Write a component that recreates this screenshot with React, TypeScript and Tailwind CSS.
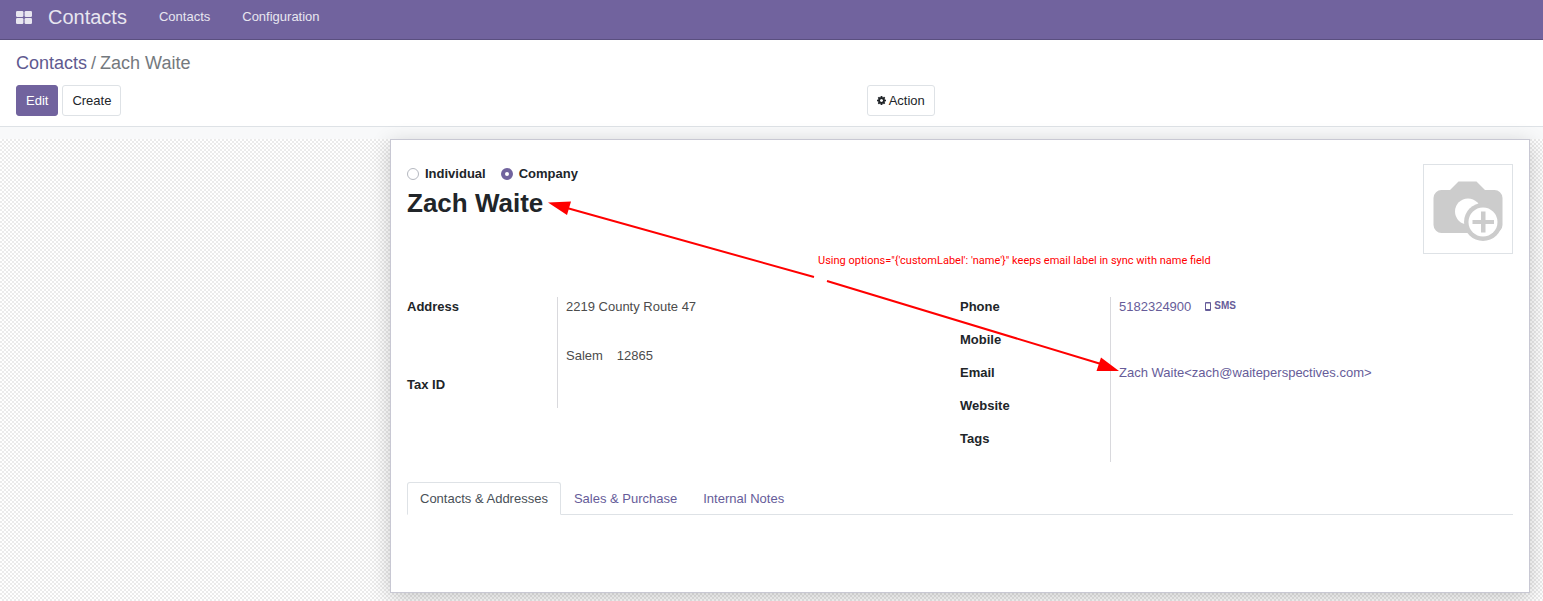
import { useState, type ReactNode } from "react";

function GridIcon() {
  return (
    <svg viewBox="0 0 16 13" className="h-[13px] w-4" fill="currentColor" aria-hidden="true">
      <rect x="0" y="0" width="7.4" height="6" rx="1.2" />
      <rect x="8.6" y="0" width="7.4" height="6" rx="1.2" />
      <rect x="0" y="7" width="7.4" height="6" rx="1.2" />
      <rect x="8.6" y="7" width="7.4" height="6" rx="1.2" />
    </svg>
  );
}

function CogIcon() {
  return (
    <svg viewBox="128 128 1536 1536" className="size-[9px]" fill="currentColor" aria-hidden="true">
      <path d="M1152 896q0-106-75-181t-181-75-181 75-75 181 75 181 181 75 181-75 75-181zm512-109v222q0 12-8 23t-20 13l-185 28q-19 54-39 91 35 50 107 138 10 12 10 25t-9 23q-27 37-99 108t-94 71q-12 0-26-9l-138-108q-44 23-91 38-16 136-29 186-7 28-36 28h-222q-14 0-24.500-8.500t-11.500-21.500l-28-184q-49-16-90-37l-141 107q-10 9-25 9-14 0-25-11-126-114-165-168-7-10-7-23 0-12 8-23 15-21 51-66.500t54-70.500q-27-50-41-99l-183-27q-13-2-21-12.500t-8-23.500v-222q0-12 8-23t19-13l186-28q14-46 39-92-40-57-107-138-10-12-10-24 0-10 9-23 26-36 98.500-107.500t94.500-71.500q13 0 26 10l138 107q44-23 91-38 16-136 29-186 7-28 36-28h222q14 0 24.500 8.500t11.500 21.500l28 184q49 16 90 37l142-107q9-9 24-9 13 0 25 10 129 119 165 170 7 8 7 22 0 12-8 23-15 21-51 66.500t-54 70.500q26 50 41 98l183 28q13 2 21 12.500t8 23.500z" />
    </svg>
  );
}

function PhoneIcon() {
  return (
    <svg viewBox="0 0 6 9" className="h-[9px] w-1.5" aria-hidden="true">
      <path
        fill="currentColor"
        fillRule="evenodd"
        d="M1 0h4a1 1 0 0 1 1 1v7a1 1 0 0 1-1 1H1a1 1 0 0 1-1-1V1a1 1 0 0 1 1-1zM1 1.600v5.400h4V1.600z"
      />
    </svg>
  );
}

function CameraIcon() {
  return (
    <svg viewBox="0 0 88 88" className="size-full" aria-hidden="true">
      <path
        fill="#ccc"
        d="M18 25h8L34.500 16.500h18L61 25h9a8 8 0 0 1 8.500 8v27a8 8 0 0 1-8.500 8H18a8 8 0 0 1-8.500-8V33a8 8 0 0 1 8.500-8z"
      />
      <circle cx="44" cy="46.500" r="13" fill="#fff" />
      <circle cx="59" cy="57" r="19" fill="#ccc" />
      <circle cx="59" cy="57" r="14.500" fill="#fff" />
      <path fill="#ccc" d="M57 46.500h4.500v8.500H70v4h-8.500v8.500H57V59h-8.500v-4H57z" />
    </svg>
  );
}

function Field({ label, tall, children }: { label: string; tall?: boolean; children?: ReactNode }) {
  return (
    <div className={tall ? "flex h-[78px]" : "flex h-[33px]"}>
      <dt className="w-[150px] shrink-0 font-bold text-[#212529]">{label}</dt>
      <dd className="min-w-0 flex-1 border-l border-[#d9d9dd] pl-2 text-[#4c4c4c]">{children}</dd>
    </div>
  );
}

function Annotation() {
  return (
    <>
      <svg
        className="pointer-events-none absolute top-[60px] left-[156px] h-[174px] w-[574px]"
        viewBox="0 0 574 174"
        aria-hidden="true"
      >
        <path d="M20 8 267 77M280 81l274 83" stroke="#f00" strokeWidth="2" fill="none" />
        <path d="M1 2.500 24 1.500 20 15zM572 171l-18-13.500-4.500 13.500z" fill="#f00" />
      </svg>
      <p className="absolute top-[113px] left-[427px] font-[Roboto,sans-serif] text-[11px] leading-4 whitespace-nowrap text-[#f00]">
        {`Using options="{'customLabel': 'name'}" keeps email label in sync with name field`}
      </p>
    </>
  );
}

const tabs = ["Contacts & Addresses", "Sales & Purchase", "Internal Notes"];
const radioClass =
  "size-3 appearance-none rounded-full border border-[#b5b8c0] bg-white checked:border-4 checked:border-[#71639e]";

export default function App() {
  const [kind, setKind] = useState("company");
  const [tab, setTab] = useState(0);

  return (
    <div className="flex min-h-screen flex-col bg-[#f8f9fa] font-['Liberation_Sans',Arial,sans-serif] text-[13px] leading-5 text-[#212529]">
      <header className="flex h-10 items-center border-b border-[#5a4f7f] bg-[#71639e] px-4 pb-1.5 text-[#e8e6f0]">
        <button type="button" aria-label="Applications" className="pt-px">
          <GridIcon />
        </button>
        <a href="#home" className="ml-4 text-xl">Contacts</a>
        <nav className="ml-8 flex gap-8">
          <a href="#contacts">Contacts</a>
          <a href="#configuration">Configuration</a>
        </nav>
      </header>

      <section className="border-b border-[#dee2e6] bg-white px-4 pt-2 pb-2.5">
        <nav aria-label="Breadcrumb" className="flex h-[37px] gap-1 pt-px text-lg text-[#74797e]">
          <a href="#contacts" className="text-[#5f5a90]">Contacts</a>
          <span>/</span>
          <span>Zach Waite</span>
        </nav>
        <div className="grid grid-cols-[563fr_437fr]">
          <div className="flex gap-1">
            <button type="button" className="h-[31px] rounded-[3px] border border-[#71639e] bg-[#71639e] px-[9px] text-white">
              Edit
            </button>
            <button type="button" className="h-[31px] rounded-[3px] border border-[#dee2e6] bg-white px-[9px]">
              Create
            </button>
          </div>
          <div className="flex">
            <button type="button" className="flex h-[31px] items-center gap-[3px] rounded-[3px] border border-[#dee2e6] bg-white px-[9px]">
              <CogIcon />
              Action
            </button>
          </div>
        </div>
      </section>

      <main className="flex flex-1 flex-col pt-3">
        <div className="flex-1 bg-[repeating-conic-gradient(#ebebeb_0_25%,#fff_0_50%)] bg-[length:4px_4px] pr-[13px] pb-2">
          <article className="relative ml-auto max-w-[1140px] border border-[#c8c8d3] bg-white px-4 pt-6 shadow-[0_5px_20px_rgba(0,0,0,0.2)]">
            <div className="flex justify-between">
              <div>
                <div className="flex gap-[15px] font-bold">
                  <label className="flex items-center gap-1.5">
                    <input type="radio" name="kind" className={radioClass} checked={kind === "individual"} onChange={() => setKind("individual")} />
                    Individual
                  </label>
                  <label className="flex items-center gap-1.5">
                    <input type="radio" name="kind" className={radioClass} checked={kind === "company"} onChange={() => setKind("company")} />
                    Company
                  </label>
                </div>
                <h1 className="text-[26px] leading-[38px] font-bold">Zach Waite</h1>
              </div>
              <button type="button" aria-label="Add a photo" className="size-[90px] border border-[#dee2e6]">
                <CameraIcon />
              </button>
            </div>

            <div className="mt-[43px] grid grid-cols-2">
              <dl>
                <Field label="Address" tall>
                  <p>2219 County Route 47</p>
                  <p className="mt-[29px] flex gap-3.5">
                    <span>Salem</span>
                    <span>12865</span>
                  </p>
                </Field>
                <Field label="Tax ID" />
              </dl>
              <dl>
                <Field label="Phone">
                  <div className="flex gap-3.5">
                    <a href="tel:5182324900" className="text-[#665c99]">5182324900</a>
                    <a href="sms:5182324900" className="flex h-[18px] items-center gap-[3px] text-[10px] font-bold text-[#665c99]">
                      <PhoneIcon />
                      SMS
                    </a>
                  </div>
                </Field>
                <Field label="Mobile" />
                <Field label="Email">
                  <a href="mailto:zach@waiteperspectives.com" className="text-[#665c99]">
                    {"Zach Waite<zach@waiteperspectives.com>"}
                  </a>
                </Field>
                <Field label="Website" />
                <Field label="Tags" />
              </dl>
            </div>

            <div role="tablist" className="mt-5 flex border-b border-[#dee2e6]">
              {tabs.map((name, i) => (
                <button
                  key={name}
                  type="button"
                  role="tab"
                  aria-selected={tab === i}
                  onClick={() => setTab(i)}
                  className={
                    tab === i
                      ? "-mb-px h-[33px] rounded-t-[3px] border border-[#dee2e6] border-b-white bg-white px-3 text-[#495057]"
                      : "-mb-px h-[33px] border border-transparent px-3 text-[#665c99]"
                  }
                >
                  {name}
                </button>
              ))}
            </div>
            <div role="tabpanel" className="min-h-[77px]" />

            <Annotation />
          </article>
        </div>
      </main>
    </div>
  );
}
